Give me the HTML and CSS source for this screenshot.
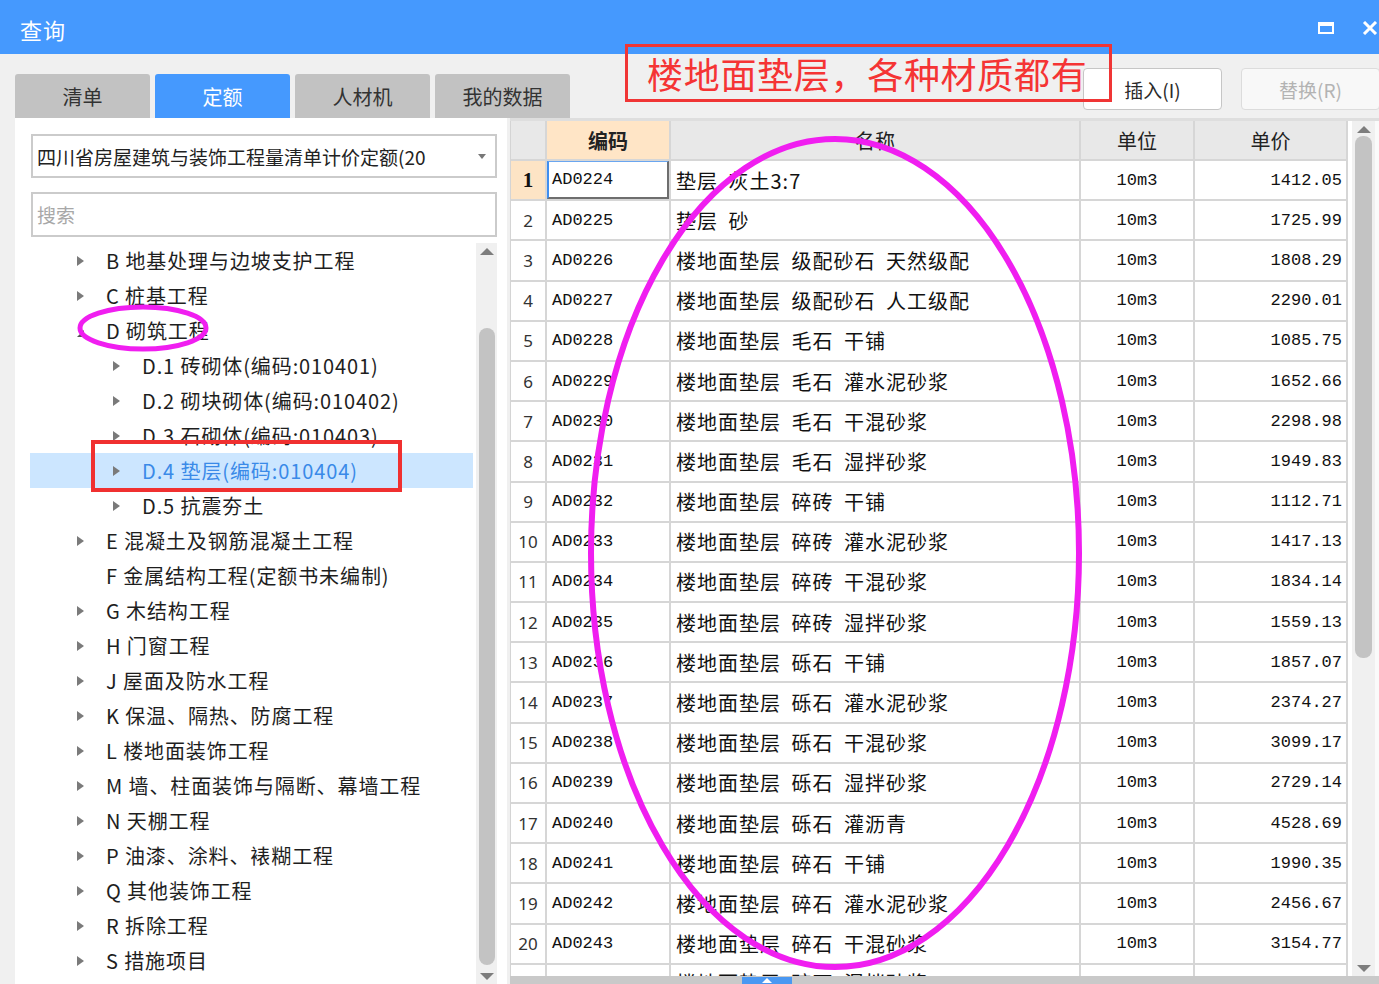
FILE: index.html
```html
<!DOCTYPE html>
<html lang="zh-CN">
<head>
<meta charset="utf-8">
<title>查询</title>
<link rel="stylesheet" href="styles.css">
</head>
<body>
<div class="window">
  <header class="titlebar">
    <span class="title">查询</span>
    <div class="win-controls">
      <span class="maxbox"></span>
      <svg class="close" width="20" height="14" viewBox="0 0 20 14"><path d="M2 1 L14 13 M14 1 L2 13" stroke="#fff" stroke-width="3" fill="none"/></svg>
    </div>
  </header>

  <div class="toolbar">
    <nav class="tabs">
      <div class="tab">清单</div>
      <div class="tab active">定额</div>
      <div class="tab">人材机</div>
      <div class="tab">我的数据</div>
    </nav>
    <div class="actions">
      <button class="btn">插入(I)</button>
      <button class="btn disabled">替换(R)</button>
    </div>
  </div>

  <div class="content">
    <aside class="left">
      <div class="combo"><span class="combo-text">四川省房屋建筑与装饰工程量清单计价定额(20</span><span class="caret"></span></div>
      <div class="search">搜索</div>
      <div class="tree-area">
        <ul class="tree">
          <li class="node l1"><i class="tw"></i><span>B 地基处理与边坡支护工程</span></li>
          <li class="node l1"><i class="tw"></i><span>C 桩基工程</span></li>
          <li class="node l1"><i class="tw open"></i><span>D 砌筑工程</span></li>
          <li class="node l2"><i class="tw"></i><span>D.1 砖砌体(编码:010401)</span></li>
          <li class="node l2"><i class="tw"></i><span>D.2 砌块砌体(编码:010402)</span></li>
          <li class="node l2"><i class="tw"></i><span>D.3 石砌体(编码:010403)</span></li>
          <li class="node l2 selected"><i class="tw"></i><span>D.4 垫层(编码:010404)</span></li>
          <li class="node l2"><i class="tw"></i><span>D.5 抗震夯土</span></li>
          <li class="node l1"><i class="tw"></i><span>E 混凝土及钢筋混凝土工程</span></li>
          <li class="node l1"><i class="tw none"></i><span>F 金属结构工程(定额书未编制)</span></li>
          <li class="node l1"><i class="tw"></i><span>G 木结构工程</span></li>
          <li class="node l1"><i class="tw"></i><span>H 门窗工程</span></li>
          <li class="node l1"><i class="tw"></i><span>J 屋面及防水工程</span></li>
          <li class="node l1"><i class="tw"></i><span>K 保温、隔热、防腐工程</span></li>
          <li class="node l1"><i class="tw"></i><span>L 楼地面装饰工程</span></li>
          <li class="node l1"><i class="tw"></i><span>M 墙、柱面装饰与隔断、幕墙工程</span></li>
          <li class="node l1"><i class="tw"></i><span>N 天棚工程</span></li>
          <li class="node l1"><i class="tw"></i><span>P 油漆、涂料、裱糊工程</span></li>
          <li class="node l1"><i class="tw"></i><span>Q 其他装饰工程</span></li>
          <li class="node l1"><i class="tw"></i><span>R 拆除工程</span></li>
          <li class="node l1"><i class="tw"></i><span>S 措施项目</span></li>
        </ul>
        <div class="tree-scroll">
          <span class="sb-arrow up"></span>
          <span class="sb-thumb tree-thumb"></span>
          <span class="sb-arrow down"></span>
        </div>
      </div>
    </aside>

    <section class="gridpane">
      <div class="grid-top"></div>
      <div class="grid-body">
        <div class="table">
          <div class="c hd"></div><div class="c hd key">编码</div><div class="c hd">名称</div><div class="c hd">单位</div><div class="c hd">单价</div>

          <div class="c num cur">1</div><div class="c code focus">AD0224</div><div class="c name">垫层 灰土3:7</div><div class="c unit">10m3</div><div class="c price">1412.05</div>
          <div class="c num">2</div><div class="c code">AD0225</div><div class="c name">垫层 砂</div><div class="c unit">10m3</div><div class="c price">1725.99</div>
          <div class="c num">3</div><div class="c code">AD0226</div><div class="c name">楼地面垫层 级配砂石 天然级配</div><div class="c unit">10m3</div><div class="c price">1808.29</div>
          <div class="c num">4</div><div class="c code">AD0227</div><div class="c name">楼地面垫层 级配砂石 人工级配</div><div class="c unit">10m3</div><div class="c price">2290.01</div>
          <div class="c num">5</div><div class="c code">AD0228</div><div class="c name">楼地面垫层 毛石 干铺</div><div class="c unit">10m3</div><div class="c price">1085.75</div>
          <div class="c num">6</div><div class="c code">AD0229</div><div class="c name">楼地面垫层 毛石 灌水泥砂浆</div><div class="c unit">10m3</div><div class="c price">1652.66</div>
          <div class="c num">7</div><div class="c code">AD0230</div><div class="c name">楼地面垫层 毛石 干混砂浆</div><div class="c unit">10m3</div><div class="c price">2298.98</div>
          <div class="c num">8</div><div class="c code">AD0231</div><div class="c name">楼地面垫层 毛石 湿拌砂浆</div><div class="c unit">10m3</div><div class="c price">1949.83</div>
          <div class="c num">9</div><div class="c code">AD0232</div><div class="c name">楼地面垫层 碎砖 干铺</div><div class="c unit">10m3</div><div class="c price">1112.71</div>
          <div class="c num">10</div><div class="c code">AD0233</div><div class="c name">楼地面垫层 碎砖 灌水泥砂浆</div><div class="c unit">10m3</div><div class="c price">1417.13</div>
          <div class="c num">11</div><div class="c code">AD0234</div><div class="c name">楼地面垫层 碎砖 干混砂浆</div><div class="c unit">10m3</div><div class="c price">1834.14</div>
          <div class="c num">12</div><div class="c code">AD0235</div><div class="c name">楼地面垫层 碎砖 湿拌砂浆</div><div class="c unit">10m3</div><div class="c price">1559.13</div>
          <div class="c num">13</div><div class="c code">AD0236</div><div class="c name">楼地面垫层 砾石 干铺</div><div class="c unit">10m3</div><div class="c price">1857.07</div>
          <div class="c num">14</div><div class="c code">AD0237</div><div class="c name">楼地面垫层 砾石 灌水泥砂浆</div><div class="c unit">10m3</div><div class="c price">2374.27</div>
          <div class="c num">15</div><div class="c code">AD0238</div><div class="c name">楼地面垫层 砾石 干混砂浆</div><div class="c unit">10m3</div><div class="c price">3099.17</div>
          <div class="c num">16</div><div class="c code">AD0239</div><div class="c name">楼地面垫层 砾石 湿拌砂浆</div><div class="c unit">10m3</div><div class="c price">2729.14</div>
          <div class="c num">17</div><div class="c code">AD0240</div><div class="c name">楼地面垫层 砾石 灌沥青</div><div class="c unit">10m3</div><div class="c price">4528.69</div>
          <div class="c num">18</div><div class="c code">AD0241</div><div class="c name">楼地面垫层 碎石 干铺</div><div class="c unit">10m3</div><div class="c price">1990.35</div>
          <div class="c num">19</div><div class="c code">AD0242</div><div class="c name">楼地面垫层 碎石 灌水泥砂浆</div><div class="c unit">10m3</div><div class="c price">2456.67</div>
          <div class="c num">20</div><div class="c code">AD0243</div><div class="c name">楼地面垫层 碎石 干混砂浆</div><div class="c unit">10m3</div><div class="c price">3154.77</div>
          <div class="c num"></div><div class="c code"></div><div class="c name partial">楼地面垫层 碎石 湿拌砂浆</div><div class="c unit"></div><div class="c price"></div>
        </div>
        <div class="grid-gap"></div>
        <div class="grid-scroll">
          <span class="sb-arrow up"></span>
          <span class="sb-thumb grid-thumb"></span>
          <span class="sb-arrow down"></span>
        </div>
        <div class="grid-edge"></div>
      </div>
      <div class="hbar"><span class="hbar-handle"><i class="hbar-arrow"></i></span></div>
    </section>
  </div>
</div>

<div class="note">楼地面垫层，各种材质都有</div>
<div class="mark-box"></div>
<svg class="marks" width="1379" height="984" viewBox="0 0 1379 984">
  <ellipse cx="143" cy="328" rx="63" ry="21" fill="none" stroke="#f01ef0" stroke-width="5"/>
  <ellipse cx="835" cy="553" rx="244" ry="414" fill="none" stroke="#f01ef0" stroke-width="6"/>
</svg>
</body>
</html>
```

FILE: styles.css
```css
* { box-sizing: border-box; }

html, body {
  margin: 0;
  padding: 0;
}

body {
  width: 1379px;
  height: 984px;
  overflow: hidden;
  position: relative;
  background: #f0f0f0;
  font-family: "Noto Sans CJK SC", "Noto Sans", sans-serif;
  color: #222;
}

.window {
  display: flex;
  flex-direction: column;
  height: 984px;
}

/* title bar */
.titlebar {
  height: 54px;
  flex: none;
  background: #4599fe;
  display: flex;
  align-items: center;
  padding-left: 20px;
  color: #fff;
}
.title {
  font-size: 22px;
  line-height: 24px;
  margin-top: 4px;
  letter-spacing: 1px;
}
.win-controls {
  margin-left: auto;
  display: flex;
  align-items: center;
  gap: 28px;
  margin-right: -3px;
  margin-top: 2px;
}
.maxbox {
  width: 16px;
  height: 12px;
  border: 2px solid #fff;
  border-top-width: 4px;
}

/* toolbar */
.toolbar {
  height: 64px;
  flex: none;
  display: flex;
  align-items: flex-start;
}
.tabs {
  display: flex;
  gap: 5px;
  margin-left: 15px;
  margin-top: 20px;
}
.tab {
  width: 135px;
  height: 44px;
  background: #c2c2c2;
  border-radius: 3px 3px 0 0;
  display: flex;
  align-items: center;
  justify-content: center;
  font-size: 20px;
  color: #333;
}
.tab.active {
  background: #4599fe;
  color: #fff;
}
.actions {
  margin-left: auto;
  margin-top: 14px;
  display: flex;
  gap: 19px;
  margin-right: -1px;
}
.btn {
  width: 139px;
  height: 42px;
  background: #fff;
  border: 1px solid #c6c6c6;
  border-radius: 4px;
  font-family: "Noto Sans CJK SC", "Noto Sans", sans-serif;
  font-size: 19px;
  color: #2a2a2a;
  padding: 0;
}
.btn.disabled {
  background: #f8f8f8;
  border-color: #dcdcdc;
  color: #b3b3b3;
}

/* content */
.content {
  flex: 1;
  display: flex;
  min-height: 0;
}

.left {
  width: 492px;
  margin-left: 15px;
  background: #fff;
  padding: 16px 10px 0 16px;
  display: flex;
  flex-direction: column;
}
.combo {
  height: 44px;
  border: 2px solid #cbcbcb;
  display: flex;
  align-items: center;
  padding-left: 4px;
  font-size: 19px;
  color: #222;
}
.combo-text { white-space: nowrap; }
.caret {
  margin-left: auto;
  margin-right: 9px;
  width: 0;
  height: 0;
  border-left: 4px solid transparent;
  border-right: 4px solid transparent;
  border-top: 5px solid #777;
}
.search {
  margin-top: 14px;
  height: 45px;
  border: 2px solid #cbcbcb;
  display: flex;
  align-items: center;
  padding-left: 4px;
  font-size: 19px;
  color: #a8a8a8;
}
.tree-area {
  margin-top: 6px;
  margin-left: -1px;
  flex: 1;
  display: flex;
  min-height: 0;
}
.tree {
  list-style: none;
  margin: 0;
  padding: 0;
  width: 443px;
  overflow: hidden;
}
.node {
  height: 35px;
  display: flex;
  align-items: center;
  font-size: 20px;
  letter-spacing: 0.9px;
  white-space: nowrap;
  color: #1e1e1e;
}
.node.l1 { padding-left: 47px; }
.node.l2 { padding-left: 83px; }
.node.selected {
  background: #cce6ff;
  color: #3a8ae8;
}
.tw {
  flex: none;
  width: 0;
  height: 0;
  border-left: 7px solid #7a7a7a;
  border-top: 5px solid transparent;
  border-bottom: 5px solid transparent;
  margin-right: 22px;
}
.tw.open {
  border-left: 7px solid transparent;
  border-top: none;
  border-bottom: 7px solid #555;
  margin-top: 6px;
}
.tw.none { visibility: hidden; }

/* scrollbars */
.tree-scroll,
.grid-scroll {
  display: flex;
  flex-direction: column;
  align-items: center;
  background: #f0f0f0;
}
.tree-scroll {
  width: 21px;
  margin-left: 3px;
}
.sb-arrow {
  flex: none;
  width: 0;
  height: 0;
  border-left: 7px solid transparent;
  border-right: 7px solid transparent;
}
.sb-arrow.up {
  border-bottom: 7px solid #7d7d7d;
  margin-top: 5px;
}
.sb-arrow.down {
  border-top: 7px solid #7d7d7d;
  margin-top: auto;
  margin-bottom: 4px;
}
.sb-thumb {
  flex: none;
  width: 16px;
  background: #c3c3c3;
  border-radius: 8px;
}
.tree-thumb {
  margin-top: 73px;
  height: 637px;
}

.gridpane {
  flex: 1;
  margin-left: 3px;
  display: flex;
  flex-direction: column;
  min-width: 0;
}
.grid-top {
  height: 3px;
  flex: none;
  background: #dedede;
}
.grid-body {
  flex: 1;
  display: flex;
  min-height: 0;
  background: #fafafa;
}
.table {
  flex: none;
  display: grid;
  grid-template-columns: 34px 122px 408px 112px 151px;
  grid-template-rows: 38px;
  grid-auto-rows: 38.2px;
  gap: 2px;
  align-content: start;
  padding-right: 2px;
  border-left: 1px solid #d4d4d4;
  background: #d6d6d6;
  overflow: hidden;
  height: 100%;
}
.c {
  background: #fff;
  display: flex;
  align-items: center;
  overflow: hidden;
  white-space: nowrap;
}
.hd {
  background: #e8e8e8;
  justify-content: center;
  font-size: 20px;
  color: #222;
}
.hd.key {
  background: #ffe5c6;
  font-weight: bold;
}
.num {
  justify-content: center;
  font-family: "Noto Sans", "Liberation Sans", sans-serif;
  font-size: 17px;
  color: #333;
}
.num.cur {
  background: #fde4c5;
  font-family: "Liberation Serif", serif;
  font-weight: bold;
  font-size: 21px;
  color: #111;
}
.code {
  padding-left: 5px;
  font-family: "Liberation Mono", monospace;
  font-size: 17px;
  color: #111;
}
.code.focus {
  border-left: 2px solid #3f8ef0;
  border-top: 1px solid #6aa6f0;
  border-right: 2px solid #6e6e6e;
  border-bottom: 2px solid #6e6e6e;
  padding-left: 3px;
}
.name {
  padding-left: 5px;
  font-size: 20px;
  letter-spacing: 1px;
  word-spacing: 5px;
  color: #111;
}
.name.partial {
  align-items: flex-start;
  padding-top: 3px;
}
.unit {
  justify-content: center;
  font-family: "Liberation Mono", monospace;
  font-size: 17px;
  color: #111;
}
.price {
  justify-content: flex-end;
  padding-right: 4px;
  font-family: "Liberation Mono", monospace;
  font-size: 17px;
  color: #111;
}
.grid-gap {
  width: 4px;
  flex: none;
  background: #fff;
}
.grid-scroll {
  width: 23px;
  flex: none;
}
.grid-thumb {
  margin-top: 3px;
  height: 522px;
  width: 17px;
}
.grid-edge {
  flex: 1;
  background: #fafafa;
}
.hbar {
  height: 8px;
  flex: none;
  background: #c9c9c9;
  position: relative;
}
.hbar-handle {
  position: absolute;
  left: 232px;
  bottom: 0;
  width: 50px;
  height: 7px;
  background: #4a98f2;
  display: flex;
  justify-content: center;
}
.hbar-arrow {
  width: 0;
  height: 0;
  border-left: 5px solid transparent;
  border-right: 5px solid transparent;
  border-bottom: 5px solid #fff;
  margin-top: 1px;
}

/* annotations */
.note {
  position: absolute;
  left: 625px;
  top: 44px;
  width: 487px;
  height: 58px;
  border: 3px solid #f03535;
  padding-left: 19px;
  display: flex;
  align-items: center;
  font-size: 36px;
  letter-spacing: 0.7px;
  color: #f53434;
  white-space: nowrap;
}
.mark-box {
  position: absolute;
  left: 91px;
  top: 440px;
  width: 311px;
  height: 52px;
  border: 4px solid #f03030;
}
.marks {
  position: absolute;
  left: 0;
  top: 0;
  pointer-events: none;
}
```
